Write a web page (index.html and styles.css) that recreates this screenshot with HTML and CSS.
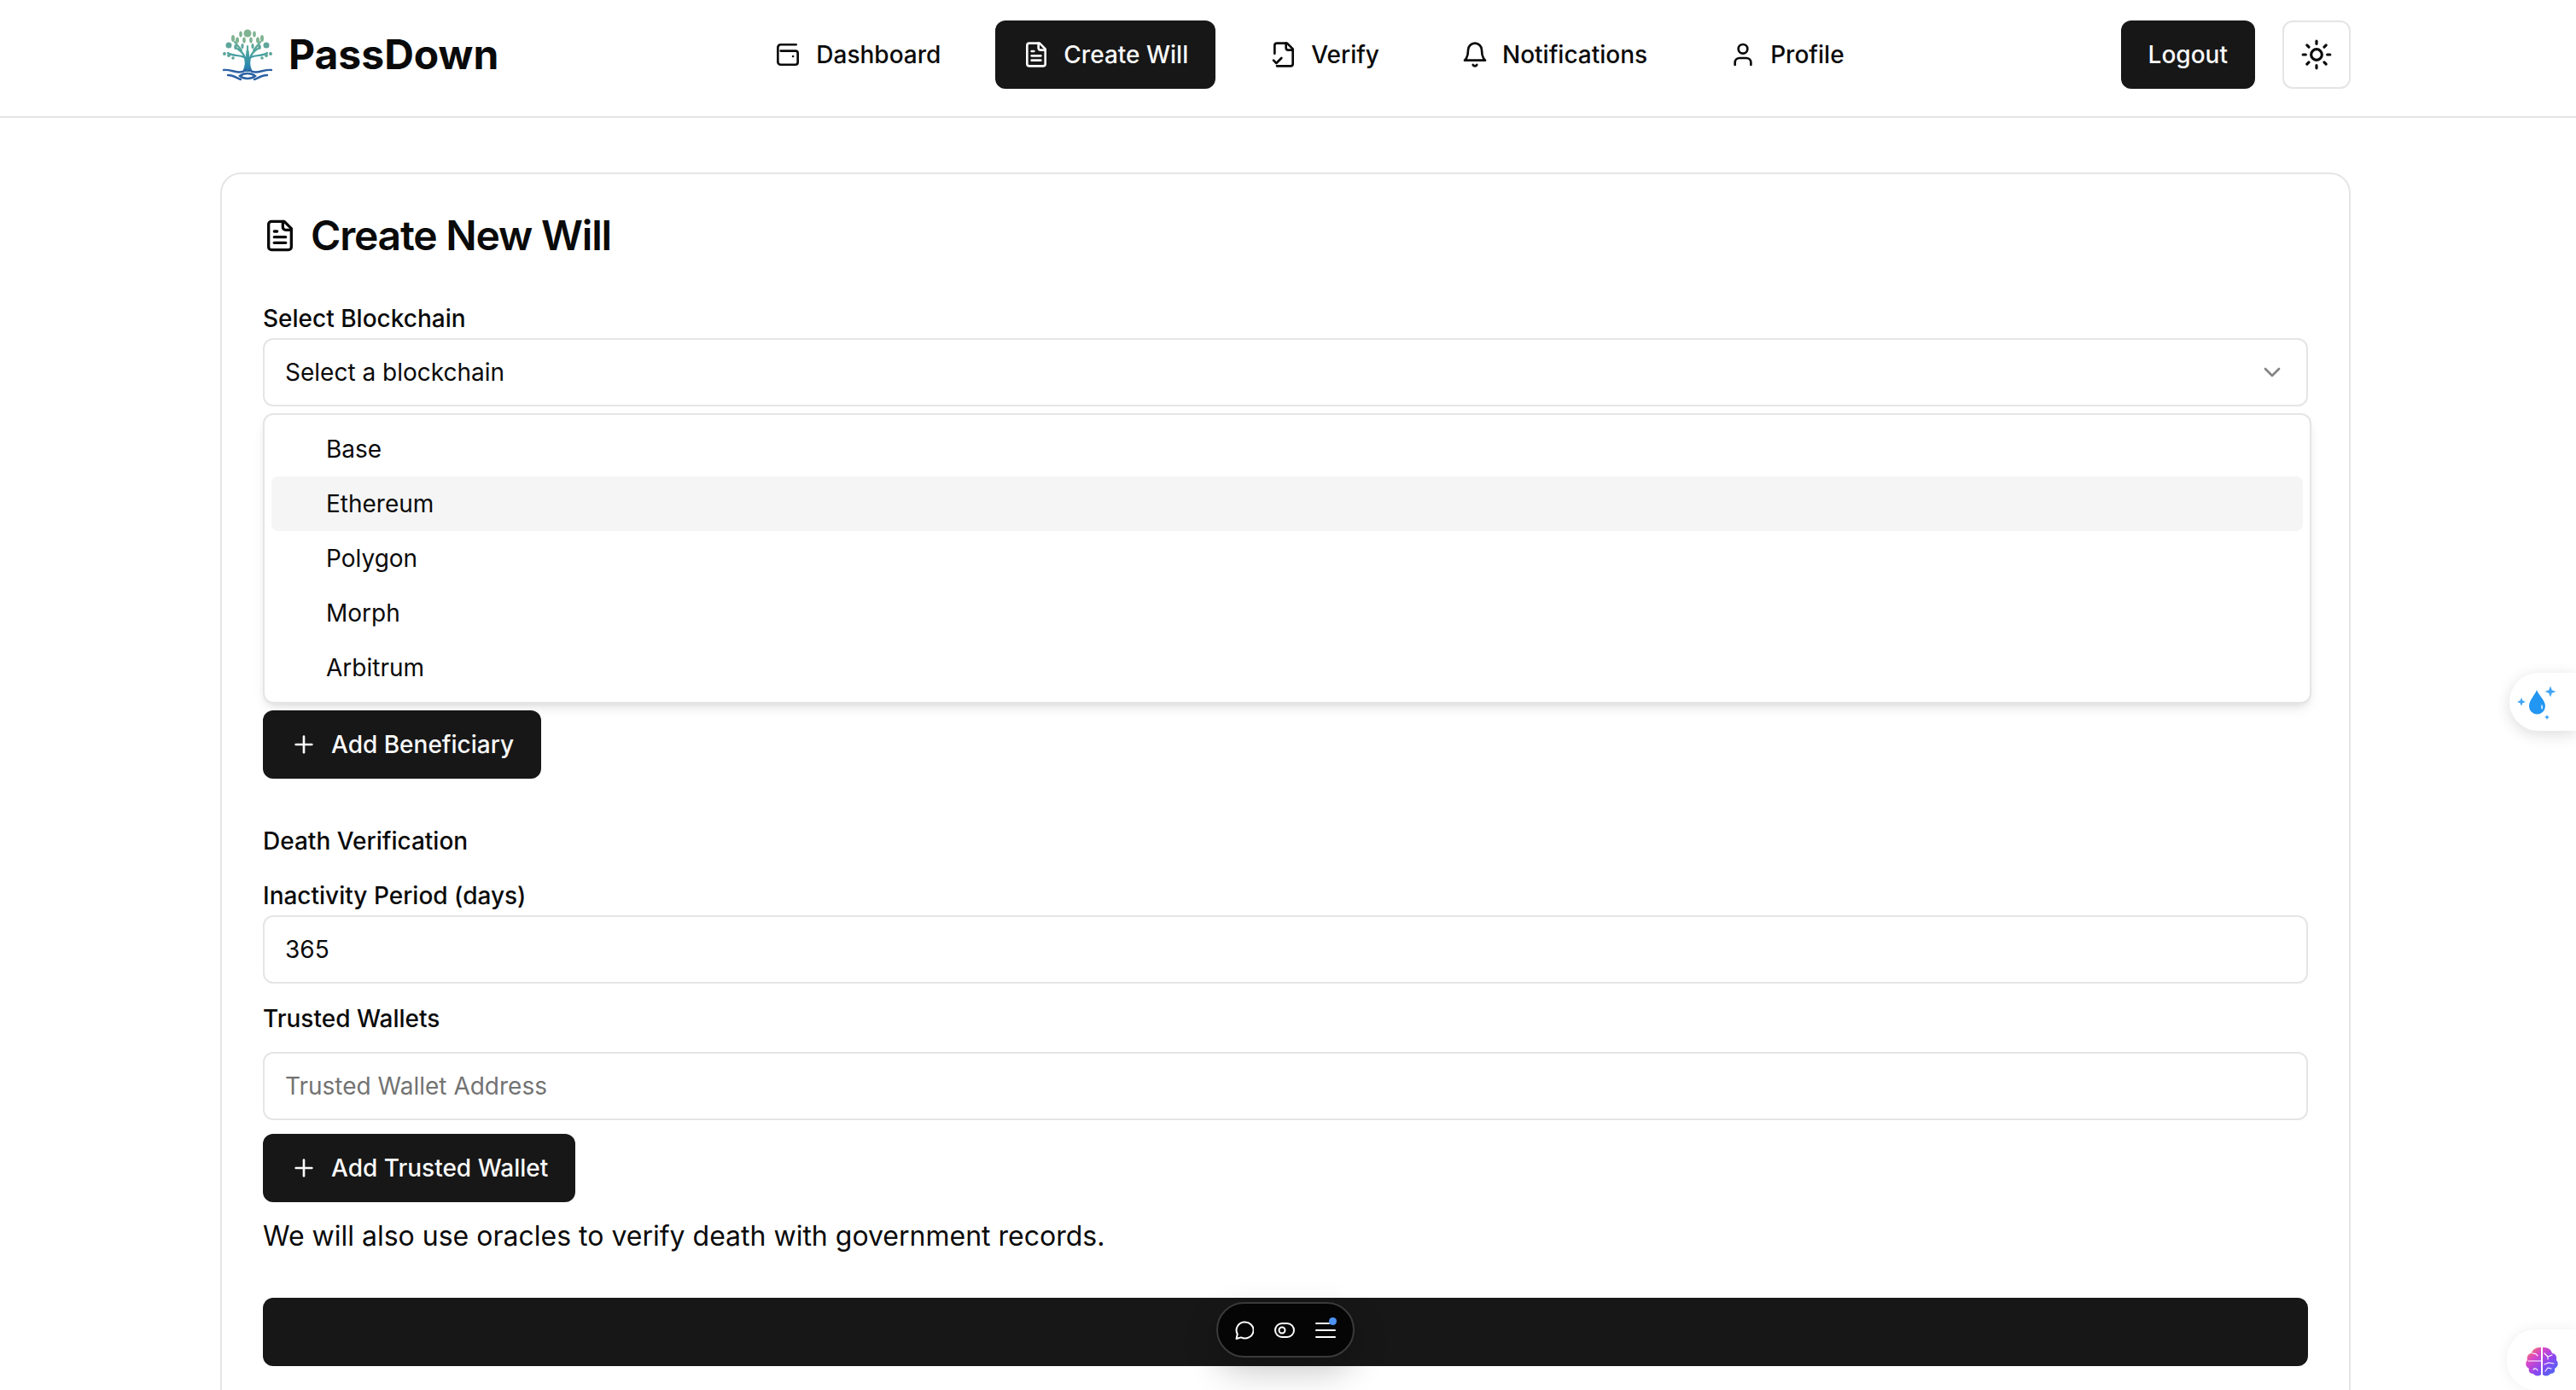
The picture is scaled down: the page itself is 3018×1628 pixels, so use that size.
FILE: index.html
```html
<!DOCTYPE html>
<html lang="en">
<head>
<meta charset="utf-8">
<title>PassDown</title>
<link rel="stylesheet" href="styles.css">
</head>
<body>
<header class="topbar">
  <div class="brand">
    <svg class="logo" viewBox="0 0 64 64" fill="none">
      <defs>
        <linearGradient id="treeGrad" gradientUnits="userSpaceOnUse" x1="0" y1="4" x2="0" y2="62">
          <stop offset="0" stop-color="#8bb88f"/>
          <stop offset=".45" stop-color="#4aa3a0"/>
          <stop offset=".72" stop-color="#2a86ae"/>
          <stop offset="1" stop-color="#2b569c"/>
        </linearGradient>
      </defs>
      <g stroke="url(#treeGrad)" stroke-width="2.200" stroke-linecap="round">
        <path d="M30 46C30 36 29 31 20 25M34 46C34 36 35 31 44 25M32 44V22M28 35C22 32 15 34 9 30M36 35C42 32 49 34 55 30M25 27L17 17M39 27L47 17"/>
      </g>
      <path d="M26 52C30 44 29.500 36 30.500 27h3C34.500 36 34 44 38 52Z" fill="url(#treeGrad)"/>
      <g fill="#7fb391">
        <circle cx="32" cy="7" r="4.500"/>
        <ellipse cx="24" cy="8" rx="1.800" ry="3.500"/>
        <ellipse cx="40" cy="8" rx="1.800" ry="3.500"/>
        <ellipse cx="15" cy="13" rx="2" ry="4"/>
        <ellipse cx="49" cy="13" rx="2" ry="4"/>
        <ellipse cx="20" cy="15" rx="2" ry="3.500"/>
        <ellipse cx="44" cy="15" rx="2" ry="3.500"/>
        <ellipse cx="28" cy="15" rx="1.800" ry="3.500"/>
        <ellipse cx="36" cy="15" rx="1.800" ry="3.500"/>
      </g>
      <g fill="#5ea59a">
        <circle cx="10" cy="21" r="3.500"/>
        <circle cx="54" cy="21" r="3.500"/>
        <ellipse cx="18" cy="23" rx="1.800" ry="3"/>
        <ellipse cx="46" cy="23" rx="1.800" ry="3"/>
        <ellipse cx="26" cy="22" rx="1.600" ry="3"/>
        <ellipse cx="38" cy="22" rx="1.600" ry="3"/>
        <circle cx="5" cy="31" r="2"/>
        <circle cx="59" cy="31" r="2"/>
        <circle cx="10" cy="33" r="2"/>
        <circle cx="54" cy="33" r="2"/>
        <circle cx="15" cy="36" r="1.800"/>
        <circle cx="49" cy="36" r="1.800"/>
      </g>
      <g stroke="#2c62a3" stroke-width="2.400" stroke-linecap="round">
        <path d="M4 50C14 49 22 56 30 50M60 50C50 49 42 56 34 50M9 56C16 56 20 60 24 61M55 56C48 56 44 60 40 61M23 57C28 53 36 53 41 57C36 61 28 61 23 57Z"/>
      </g>
    </svg>
    <span class="brand-name">PassDown</span>
  </div>
  <nav class="main-nav">
    <a class="btn btn-ghost">
      <svg class="ico" viewBox="0 0 24 24"><path d="M18.500 3.200H5a2.500 2.500 0 0 0-2.500 2.500v12.600a2.500 2.500 0 0 0 2.500 2.500h13a2 2 0 0 0 2-2v-8.100a2 2 0 0 0-2-2H5"/><path d="M15.800 13.500h.01"/></svg>
      Dashboard
    </a>
    <a class="btn btn-dark">
      <svg class="ico" viewBox="0 0 24 24"><path d="M15 2H6a2 2 0 0 0-2 2v16a2 2 0 0 0 2 2h12a2 2 0 0 0 2-2V7Z"/><path d="M14 2v4a2 2 0 0 0 2 2h4"/><path d="M10 9H8"/><path d="M16 13H8"/><path d="M16 17H8"/></svg>
      Create Will
    </a>
    <a class="btn btn-ghost">
      <svg class="ico" viewBox="0 0 24 24"><path d="M14 2v4a2 2 0 0 0 2 2h4"/><path d="M4 11V4a2 2 0 0 1 2-2h9l5 5v13a2 2 0 0 1-2 2H6"/><path d="m3 17 2.500 2.500L10 15"/></svg>
      Verify
    </a>
    <a class="btn btn-ghost">
      <svg class="ico" viewBox="0 0 24 24"><path d="M6 8a6 6 0 0 1 12 0c0 7 3 9 3 9H3s3-2 3-9"/><path d="M10.300 21a1.940 1.940 0 0 0 3.400 0"/></svg>
      Notifications
    </a>
    <a class="btn btn-ghost">
      <svg class="ico" viewBox="0 0 24 24"><path d="M19 21v-2a4 4 0 0 0-4-4H9a4 4 0 0 0-4 4v2"/><circle cx="12" cy="7" r="4"/></svg>
      Profile
    </a>
  </nav>
  <div class="actions">
    <a class="btn btn-dark">Logout</a>
    <a class="btn btn-icon">
      <svg class="sun-ico" viewBox="0 0 24 24"><circle cx="12" cy="12" r="4"/><path d="M12 2v2"/><path d="M12 20v2"/><path d="m4.930 4.930 1.410 1.410"/><path d="m17.660 17.660 1.410 1.410"/><path d="M2 12h2"/><path d="M20 12h2"/><path d="m6.340 17.660-1.410 1.410"/><path d="m19.070 4.930-1.410 1.410"/></svg>
    </a>
  </div>
</header>

<main class="page">
  <section class="card">
    <h1 class="card-title">
      <svg class="title-ico" viewBox="0 0 24 24"><path d="M15 2H6a2 2 0 0 0-2 2v16a2 2 0 0 0 2 2h12a2 2 0 0 0 2-2V7Z"/><path d="M14 2v4a2 2 0 0 0 2 2h4"/><path d="M10 9H8"/><path d="M16 13H8"/><path d="M16 17H8"/></svg>
      Create New Will
    </h1>

    <div class="select-group">
      <label class="label">Select Blockchain</label>
      <div class="field select-field">
        <span>Select a blockchain</span>
        <svg class="chevron" viewBox="0 0 24 24"><path d="m6 9 6 6 6-6"/></svg>
      </div>
      <div class="dropdown">
        <div class="option">Base</div>
        <div class="option option-active">Ethereum</div>
        <div class="option">Polygon</div>
        <div class="option">Morph</div>
        <div class="option">Arbitrum</div>
      </div>
    </div>

    <a class="btn btn-dark btn-add add-beneficiary">
      <svg class="ico" viewBox="0 0 24 24"><path d="M5 12h14"/><path d="M12 5v14"/></svg>
      Add Beneficiary
    </a>

    <div class="section-title">Death Verification</div>
    <label class="label label-inactivity">Inactivity Period (days)</label>
    <div class="field">365</div>
    <label class="label label-wallets">Trusted Wallets</label>
    <div class="field field-placeholder">Trusted Wallet Address</div>
    <a class="btn btn-dark btn-add add-wallet">
      <svg class="ico" viewBox="0 0 24 24"><path d="M5 12h14"/><path d="M12 5v14"/></svg>
      Add Trusted Wallet
    </a>
    <p class="note">We will also use oracles to verify death with government records.</p>
    <div class="submit-bar"></div>
  </section>
</main>

<div class="pill-toolbar">
  <svg class="pill-ico" viewBox="0 0 24 24"><path d="M3.500 22l1.300-5.500A10 9.500 0 1 1 9 20.400Z"/></svg>
  <svg class="pill-ico" viewBox="0 0 24 24"><rect x="1" y="4" width="22" height="16" rx="8"/><circle cx="9" cy="12" r="3.500"/></svg>
  <span class="pill-menu">
    <svg class="pill-ico" viewBox="0 0 24 24"><path d="M1 4h15"/><path d="M1 12h22"/><path d="M1 20h22"/></svg>
    <i class="pill-dot"></i>
  </span>
</div>

<div class="side-widget widget-drop">
  <svg class="widget-svg" viewBox="0 0 48 44">
    <path class="drop" d="M24 8C22 14 15 20 15 27a9.500 9.500 0 0 0 19 0C34 20 26 14 24 8Z"/>
    <path fill="#cfe8fb" d="M30 25c1.500 2 1.500 4 .5 6-1.500-.5-2-4-.5-6Z"/>
    <path class="spark" d="M40 3.500l1.800 4.700 4.700 1.800-4.700 1.800L40 16.500l-1.800-4.700L33.500 10l4.700-1.800Z"/>
    <path class="spark" d="M6 17l1.400 3.600L11 22l-3.600 1.400L6 27l-1.400-3.600L1 22l3.600-1.400Z"/>
    <path class="spark" d="M36 37l.9 2.100 2.100.9-2.100.9-.9 2.100-.9-2.100-2.100-.9 2.100-.9Z"/>
  </svg>
</div>

<div class="side-widget widget-brain">
  <svg class="widget-svg" viewBox="0 0 40 36">
    <defs>
      <linearGradient id="brainGrad" x1="0" y1="0" x2="1" y2="1">
        <stop offset="0" stop-color="#fb923c"/>
        <stop offset=".3" stop-color="#d946c8"/>
        <stop offset=".6" stop-color="#8b46f0"/>
        <stop offset="1" stop-color="#3b72f6"/>
      </linearGradient>
    </defs>
    <path fill="url(#brainGrad)" d="M19 2v32c-2 2-7 2-9-1-4 0-6-3-5-6-4-2-5-7-2-10-1-4 1-8 5-8 1-4 4-7 11-7ZM21 2c7 0 10 3 11 7 4 0 6 4 5 8 3 3 2 8-2 10 1 3-1 6-5 6-2 3-7 3-9 1Z"/>
    <path class="brain-line" d="M4 18h15M9 9c3 0 5 1 6 3M10 28c2-2 4-1 5 1M23 9l4 4 5-2M27 13v3M23 22l5-2 6 1M24 30l3-4 4 1"/>
  </svg>
</div>
</body>
</html>
```
FILE: styles.css
```css
* { box-sizing: border-box; }
html, body { margin: 0; padding: 0; height: 100%; overflow: hidden; background: #fff; }
body { font-family: Inter, "Liberation Sans", sans-serif; color: #0a0a0a; font-size: 28px; line-height: 40px; }

.topbar { display: flex; justify-content: space-between; align-items: flex-start; height: 138px; padding: 24px 264px 0 258px; border-bottom: 2px solid #e5e5e5; }
.brand { display: flex; align-items: center; gap: 16px; height: 80px; }
.logo { width: 64px; height: 64px; display: block; }
.brand-name { font-size: 48px; font-weight: 700; line-height: 64px; }
.main-nav { display: flex; gap: 32px; }
.actions { display: flex; gap: 32px; }

.btn { display: inline-flex; align-items: center; gap: 16px; height: 80px; padding: 0 32px; border-radius: 12px; font-weight: 500; white-space: nowrap; }
.btn-ghost { color: #0a0a0a; }
.btn-dark { background: #171717; color: #fafafa; }
.btn-icon { width: 80px; padding: 0; justify-content: center; border: 2px solid #e5e5e5; background: #fff; }
.ico, .sun-ico { width: 32px; height: 32px; flex: none; fill: none; stroke: currentColor; stroke-width: 2; stroke-linecap: round; stroke-linejoin: round; }
.sun-ico { width: 38px; height: 38px; }

.page { padding: 64px 264px 0 258px; }
.card { height: 1600px; padding: 0 48px; border: 2px solid #e5e5e5; border-radius: 24px; background: #fff; }
.card-title { display: flex; align-items: center; gap: 16px; margin: 48px 0 0; font-size: 48px; line-height: 48px; font-weight: 600; letter-spacing: -1.200px; }
.title-ico { width: 40px; height: 40px; flex: none; fill: none; stroke: currentColor; stroke-width: 2; stroke-linecap: round; stroke-linejoin: round; }

.label { display: block; font-weight: 500; line-height: 28px; }
.select-group { position: relative; margin-top: 59px; }
.select-group .label { margin-bottom: 9px; }
.field { display: flex; align-items: center; height: 80px; padding: 0 24px; border: 2px solid #e5e5e5; border-radius: 12px; background: #fff; }
.select-field { justify-content: space-between; }
.field-placeholder { color: #737373; }
.chevron { width: 32px; height: 32px; fill: none; stroke: #0a0a0a; stroke-opacity: .5; stroke-width: 2; stroke-linecap: round; stroke-linejoin: round; }

.dropdown { position: absolute; top: 125px; left: 0; width: 2400px; height: 340px; padding: 8px; border: 2px solid #e5e5e5; border-radius: 12px; background: #fff; box-shadow: 0 8px 16px -4px rgba(0,0,0,.1), 0 4px 8px -4px rgba(0,0,0,.1); z-index: 2; }
.option { display: flex; align-items: center; height: 64px; padding-left: 64px; border-radius: 8px; }
.option-active { background: #f5f5f5; }

.btn-add { display: flex; width: max-content; }
.add-beneficiary { margin-top: 356px; }
.section-title { margin-top: 59px; font-weight: 500; line-height: 28px; }
.label-inactivity { margin-top: 36px; margin-bottom: 9px; }
.label-wallets { margin-top: 27px; margin-bottom: 25px; }
.add-wallet { margin-top: 16px; }
.note { margin: 20px 0 0; font-size: 32px; line-height: 40px; }
.submit-bar { height: 80px; margin-top: 52px; border-radius: 12px; background: #171717; }

.pill-toolbar { position: fixed; left: 1425px; top: 1525px; display: flex; align-items: center; gap: 24px; width: 162px; height: 65px; padding: 0 18px; border: 2px solid #3a3a3a; border-radius: 33px; background: #050505; box-shadow: 0 16px 40px rgba(0,0,0,.22); color: #fff; }
.pill-ico { width: 24px; height: 24px; flex: none; fill: none; stroke: #fff; stroke-width: 2; stroke-linecap: round; stroke-linejoin: round; display: block; }
.pill-menu { position: relative; display: block; width: 24px; height: 24px; }
.pill-dot { position: absolute; top: -3px; right: -1px; width: 9px; height: 9px; border-radius: 50%; background: #4c93f5; }

.side-widget { position: fixed; right: 0; background: #fff; border-radius: 34px 0 0 34px; display: flex; align-items: flex-start; }
.widget-drop { top: 788px; width: 78px; height: 68px; padding: 12px 0 0 8px; box-shadow: 0 4px 18px rgba(0,0,0,.14); }
.widget-drop .widget-svg { width: 48px; height: 44px; }
.widget-brain { top: 1557px; width: 81px; height: 71px; padding: 19px 0 0 21px; box-shadow: 0 0 16px rgba(0,0,0,.07); }
.widget-brain .widget-svg { width: 40px; height: 36px; }
.drop { fill: #2196f3; }
.spark { fill: #42a5f5; }
.brain-line { fill: none; stroke: #fff; stroke-width: 1.100; stroke-linecap: round; stroke-linejoin: round; }
```
